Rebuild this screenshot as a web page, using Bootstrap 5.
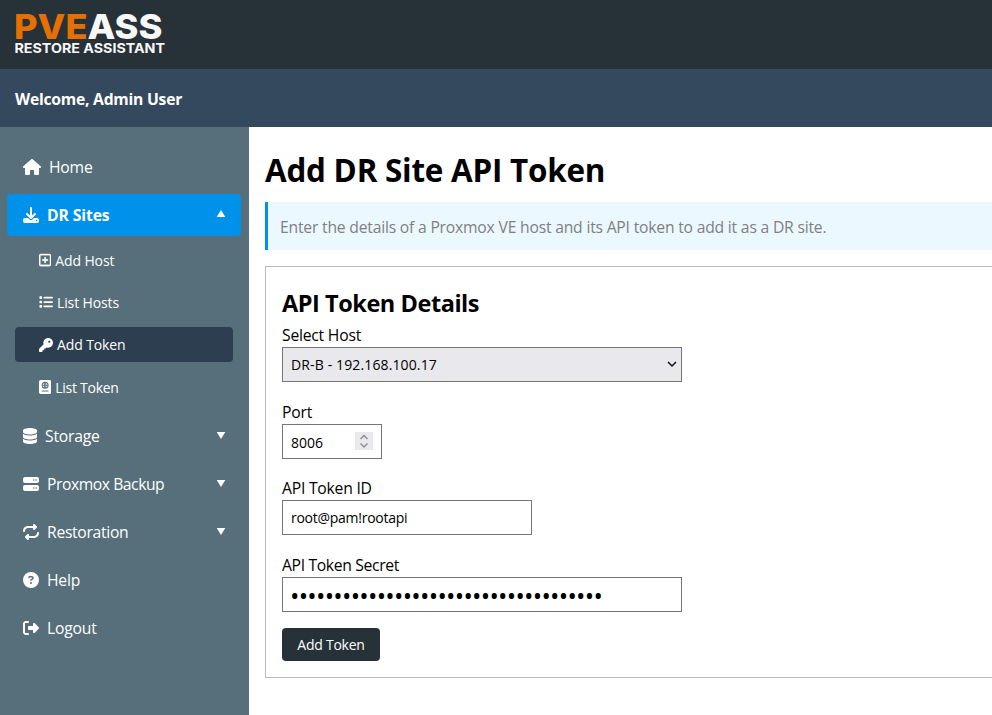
<!DOCTYPE html>
<html lang="en">
<head>
<meta charset="utf-8">
<meta name="viewport" content="width=device-width, initial-scale=1">
<title>PVEASS Restore Assistant</title>
<link href="https://cdn.jsdelivr.net/npm/bootstrap@5.3.0/dist/css/bootstrap.min.css" rel="stylesheet">
<style>
body{font-family:"Open Sans","Noto Sans",sans-serif;font-size:15.7px;line-height:21px;color:#000;background:#fff;height:715px;overflow:hidden}
.brandbar{height:69px;background:#273238}
.brandbar svg{display:block}
.welcomebar{height:58px;background:#34495e;color:#fff;padding:3px 15px 0;letter-spacing:-.24px}
.sidebar{width:249px;background:#566f7a;padding:19px 8px 0 7px}
.side-link{height:42px;margin-bottom:6px;padding:1px 15px 0 16px;color:#fff;text-decoration:none;border-radius:4px;letter-spacing:-.2px}
.side-link.open{background:#0091ea;font-weight:700;letter-spacing:-.1px}
.side-link svg{height:16px;fill:#fff;margin:-1px 8px 0 0;flex:none}
.side-link .caret{height:7px;width:10px;margin:-2px 0 0 auto}
.side-link.open .caret{margin-top:-4px}
.submenu{padding:0 8px 4px;margin:0}
.sub-link{height:35.3px;margin-bottom:7px;padding:1px 24px 0;font-size:14px;color:#fff;text-decoration:none;border-radius:4px;letter-spacing:-.12px}
.sub-link.current{background:#2d3e50}
.sub-link svg{height:14px;fill:#fff;margin-right:4px;flex:none}
main{padding:16px 0 0 16px}
h1{font-size:31.4px;line-height:43px;font-weight:700;margin:5px 0 11px;white-space:nowrap;letter-spacing:-.23px}
.hint{height:48px;background:#ecf8ff;border-left:3px solid #0091ea;color:#808080;padding:3px 0 0 12px;margin-bottom:16px;white-space:nowrap;letter-spacing:-.205px}
.panel{height:412px;border:1px solid #bbb;border-right:0;padding:20px 16px 0}
h2{font-size:23.5px;line-height:32px;font-weight:700;margin:0 0 6px;letter-spacing:-.45px}
.panel label{display:block;line-height:21px;margin-bottom:1px;letter-spacing:-.22px}
.field{display:flex;align-items:center;height:35px;border:1px solid #767676;background:#fff;padding:0 8px;font-size:14px;line-height:20px;color:#000;margin-bottom:19.67px;border-radius:0;outline:0}
.w400{width:400px}.w250{width:250px}.w100{width:100px}
.pick{background:#e9e9ed;letter-spacing:.13px}
.pick svg{margin-right:-4px}
.tight{letter-spacing:-.27px}
.tighter{letter-spacing:-.45px}
.snug{letter-spacing:-.3px}
.panel label.close-set{letter-spacing:-.34px}
.secret{font-size:25px;letter-spacing:-.73px;padding:1px 8px 0 7px;margin-bottom:16px}
.btn-add{height:33px;width:98px;background:#273238;color:#fff;font-size:14px;border:0;border-radius:4px;padding:1px 0 0;display:block;letter-spacing:-.25px}
.stepper{width:18px;height:18px;background:#e9e9ed}
</style>
</head>
<body class="d-flex flex-column">
<header class="brandbar flex-shrink-0">
<svg width="180" height="69" role="img" font-family="Inter, sans-serif">
<text x="14" y="38.800" font-size="34" font-weight="800" fill="#e57000" textLength="73.500" lengthAdjust="spacingAndGlyphs">PVE</text>
<text x="87.500" y="38.800" font-size="34" font-weight="800" fill="#f8f8f8" textLength="75" lengthAdjust="spacingAndGlyphs">ASS</text>
<text x="14.500" y="53" font-size="13.200" font-weight="700" fill="#f8f8f8" textLength="150.500" lengthAdjust="spacingAndGlyphs">RESTORE ASSISTANT</text>
</svg>
</header>
<div class="welcomebar d-flex align-items-center fw-bold flex-shrink-0">Welcome, Admin User</div>
<div class="d-flex flex-grow-1">
<nav class="sidebar flex-shrink-0">
<a href="#" class="side-link d-flex align-items-center"><svg viewBox="0 0 576 512"><path d="M575.8 255.500c0 18-15 32.100-32 32.100h-32l.7 160.200c0 2.700-.2 5.400-.5 8.100V472c0 22.100-17.900 40-40 40H392c-22.100 0-40-17.900-40-40V384c0-17.700-14.300-32-32-32H256c-17.700 0-32 14.300-32 32v88c0 22.100-17.900 40-40 40H104c-22.100 0-40-17.900-40-40V287.600H32c-18 0-32-14-32-32.100c0-9 3-17 10-24L266.400 8c7-7 15-8 22-8s15 2 21 7L564.800 231.500c8 7 12 15 11 24z"/></svg><span>Home</span></a>
<a href="#" class="side-link open d-flex align-items-center"><svg viewBox="0 0 512 512"><path d="M288 32c0-17.700-14.300-32-32-32s-32 14.300-32 32V274.700l-73.400-73.400c-12.500-12.500-32.800-12.500-45.300 0s-12.500 32.800 0 45.300l128 128c12.500 12.500 32.800 12.500 45.300 0l128-128c12.500-12.500 12.500-32.800 0-45.300s-32.800-12.500-45.300 0L288 274.700V32zM64 352c-35.300 0-64 28.700-64 64v32c0 35.300 28.700 64 64 64H448c35.300 0 64-28.700 64-64V416c0-35.300-28.700-64-64-64H346.500l-45.300 45.300c-25 25-65.500 25-90.500 0L165.500 352H64zm368 56a24 24 0 1 1 0 48 24 24 0 1 1 0-48z"/></svg><span>DR Sites</span><svg class="caret" viewBox="0 0 10 7"><path d="M5 0l4.300 7H.7z"/></svg></a>
<div class="submenu">
<a href="#" class="sub-link d-flex align-items-center"><svg viewBox="0 0 448 512"><path d="M64 80c-8.800 0-16 7.200-16 16v320c0 8.800 7.200 16 16 16h320c8.800 0 16-7.200 16-16V96c0-8.800-7.200-16-16-16H64zM0 96C0 60.700 28.700 32 64 32h320c35.300 0 64 28.700 64 64v320c0 35.300-28.700 64-64 64H64c-35.300 0-64-28.700-64-64V96zM200 344v-64h-64c-13.300 0-24-10.700-24-24s10.700-24 24-24h64v-64c0-13.300 10.700-24 24-24s24 10.700 24 24v64h64c13.300 0 24 10.700 24 24s-10.700 24-24 24h-64v64c0 13.300-10.700 24-24 24s-24-10.700-24-24z" stroke="#fff" stroke-width="12"/></svg><span>Add Host</span></a>
<a href="#" class="sub-link d-flex align-items-center"><svg viewBox="0 0 512 512"><path d="M40 48C26.700 48 16 58.700 16 72v48c0 13.300 10.700 24 24 24h48c13.300 0 24-10.700 24-24V72c0-13.300-10.700-24-24-24H40zM192 64c-17.700 0-32 14.300-32 32s14.300 32 32 32h288c17.700 0 32-14.300 32-32s-14.300-32-32-32H192zm0 160c-17.700 0-32 14.300-32 32s14.300 32 32 32h288c17.700 0 32-14.300 32-32s-14.300-32-32-32H192zm0 160c-17.700 0-32 14.300-32 32s14.300 32 32 32h288c17.700 0 32-14.300 32-32s-14.300-32-32-32H192zM16 232v48c0 13.300 10.700 24 24 24h48c13.300 0 24-10.700 24-24v-48c0-13.300-10.700-24-24-24H40c-13.300 0-24 10.700-24 24zM40 368c-13.300 0-24 10.700-24 24v48c0 13.300 10.700 24 24 24h48c13.300 0 24-10.700 24-24v-48c0-13.300-10.700-24-24-24H40z"/></svg><span>List Hosts</span></a>
<a href="#" class="sub-link current d-flex align-items-center"><svg viewBox="0 0 512 512"><path d="M336 352c97.200 0 176-78.800 176-176S433.200 0 336 0S160 78.800 160 176c0 18.700 2.900 36.800 8.300 53.700L7 391c-4.500 4.500-7 10.600-7 17v80c0 13.300 10.700 24 24 24h80c13.300 0 24-10.700 24-24v-40h40c13.300 0 24-10.700 24-24v-40h40c6.400 0 12.500-2.500 17-7l33.300-33.300c16.900 5.400 35 8.300 53.700 8.300zM376 96a40 40 0 1 1 0 80 40 40 0 1 1 0-80z"/></svg><span>Add Token</span></a>
<a href="#" class="sub-link tight d-flex align-items-center"><svg viewBox="0 0 448 512"><path fill-rule="evenodd" d="M64 0h320c35.300 0 64 28.700 64 64v384c0 35.300-28.700 64-64 64H64c-35.300 0-64-28.700-64-64V64C0 28.700 28.700 0 64 0zM112 384c-21 0-21 32 0 32h224c21 0 21-32 0-32zM352 192a128 128 0 1 0-256 0 128 128 0 1 0 256 0z"/><path d="M196 112c-10 18-15 40-16 64h-47c5-28 30-54 63-64m-63 96h47c1 24 6 46 16 64-33-10-58-36-63-64m79 0h24c-2 35-9 56-12 56s-10-21-12-56m0-32c2-35 9-56 12-56s10 21 12 56zm56 32h47c-5 28-30 54-63 64 10-18 15-40 16-64m0-32c-1-24-6-46-16-64 33 10 58 36 63 64z"/></svg><span>List Token</span></a>
</div>
<a href="#" class="side-link d-flex align-items-center"><svg viewBox="0 0 448 512"><path d="M448 80v48c0 44.200-100.300 80-224 80S0 172.200 0 128V80C0 35.800 100.300 0 224 0s224 35.800 224 80zM393.200 214.700c20.800-7.400 39.900-16.900 54.800-28.600V288c0 44.200-100.300 80-224 80S0 332.200 0 288V186.100c14.900 11.800 34 21.200 54.800 28.600C99.700 230.700 159.500 240 224 240s124.300-9.300 169.200-25.300zM0 346.100c14.900 11.800 34 21.200 54.800 28.600C99.700 390.700 159.500 400 224 400s124.300-9.300 169.200-25.300c20.800-7.400 39.900-16.900 54.800-28.600V432c0 44.200-100.300 80-224 80S0 476.200 0 432v-85.900z"/></svg><span>Storage</span><svg class="caret" viewBox="0 0 10 7"><path d="M.7 0h8.600L5 7z"/></svg></a>
<a href="#" class="side-link d-flex align-items-center"><svg viewBox="0 0 512 512"><path d="M64 32C28.700 32 0 60.700 0 96v64c0 35.300 28.700 64 64 64h384c35.300 0 64-28.700 64-64V96c0-35.300-28.700-64-64-64H64zm280 72a24 24 0 1 1 0 48 24 24 0 1 1 0-48zm48 24a24 24 0 1 1 48 0 24 24 0 1 1-48 0zM64 288c-35.300 0-64 28.700-64 64v64c0 35.300 28.700 64 64 64h384c35.300 0 64-28.700 64-64v-64c0-35.300-28.700-64-64-64H64zm280 72a24 24 0 1 1 0 48 24 24 0 1 1 0-48zm56 24a24 24 0 1 1 48 0 24 24 0 1 1-48 0z"/></svg><span class="tighter">Proxmox Backup</span><svg class="caret" viewBox="0 0 10 7"><path d="M.7 0h8.600L5 7z"/></svg></a>
<a href="#" class="side-link d-flex align-items-center"><svg viewBox="0 0 512 512"><path d="M0 224c0 17.700 14.300 32 32 32s32-14.300 32-32c0-53 43-96 96-96h160v32c0 12.900 7.800 24.600 19.800 29.600s25.700 2.200 34.900-6.900l64-64c12.500-12.500 12.500-32.800 0-45.300l-64-64c-9.200-9.200-22.900-11.900-34.900-6.900S320 19.100 320 32v32H160C71.600 64 0 135.600 0 224zm512 64c0-17.700-14.300-32-32-32s-32 14.300-32 32c0 53-43 96-96 96H192v-32c0-12.900-7.800-24.600-19.800-29.600s-25.700-2.200-34.900 6.900l-64 64c-12.500 12.500-12.500 32.800 0 45.300l64 64c9.200 9.200 22.900 11.900 34.900 6.900s19.800-16.600 19.800-29.600v-32h160c88.400 0 160-71.600 160-160z"/></svg><span class="snug">Restoration</span><svg class="caret" viewBox="0 0 10 7"><path d="M.7 0h8.600L5 7z"/></svg></a>
<a href="#" class="side-link d-flex align-items-center"><svg viewBox="0 0 512 512"><path d="M256 512A256 256 0 1 0 256 0a256 256 0 1 0 0 512zM169.800 165.300c7.900-22.300 29.100-37.300 52.800-37.300h58.300c34.900 0 63.100 28.300 63.100 63.100c0 22.600-12.100 43.500-31.700 54.800L280 264.400c-.2 13-10.900 23.600-24 23.600c-13.300 0-24-10.700-24-24v-13.500c0-8.600 4.600-16.500 12.100-20.800l44.300-25.400c4.700-2.700 7.600-7.700 7.600-13.100c0-8.400-6.800-15.100-15.100-15.100h-58.300c-3.400 0-6.400 2.100-7.500 5.300l-.4 1.200c-4.400 12.500-18.200 19-30.600 14.600s-19-18.200-14.600-30.600l.3-1.300zM224 352a32 32 0 1 1 64 0 32 32 0 1 1-64 0z"/></svg><span>Help</span></a>
<a href="#" class="side-link d-flex align-items-center"><svg viewBox="0 0 512 512"><path d="M377.900 105.900L500.700 228.700c7.200 7.200 11.300 17.100 11.300 27.300s-4.100 20.100-11.300 27.300L377.900 406.100c-6.400 6.400-15 9.900-24 9.900c-18.700 0-33.900-15.200-33.900-33.900V320H192c-17.700 0-32-14.300-32-32v-64c0-17.700 14.300-32 32-32h128v-62.100c0-18.700 15.200-33.900 33.900-33.900c9 0 17.600 3.600 24 9.900zM160 96H96c-17.700 0-32 14.300-32 32v256c0 17.700 14.300 32 32 32h64c17.700 0 32 14.300 32 32s-14.300 32-32 32H96c-53 0-96-43-96-96V128C0 75 43 32 96 32h64c17.700 0 32 14.300 32 32s-14.300 32-32 32z"/></svg><span>Logout</span></a>
</nav>
<main class="flex-grow-1">
<h1>Add DR Site API Token</h1>
<div class="hint d-flex align-items-center">Enter the details of a Proxmox VE host and its API token to add it as a DR site.</div>
<section class="panel">
<h2>API Token Details</h2>
<label>Select Host</label>
<div class="field pick w400 justify-content-between" role="combobox"><span>DR-B - 192.168.100.17</span><svg width="10" height="7" viewBox="0 0 10 7"><path d="M1 1l4 4 4-4" fill="none" stroke="#111" stroke-width="1.500"/></svg></div>
<label>Port</label>
<div class="field w100 justify-content-between"><span class="pt-1">8006</span><svg class="stepper" viewBox="0 0 18 18"><path d="M5.500 7L9 3.500 12.500 7M5.500 11.500L9 15l3.500-3.500" fill="none" stroke="#8f8f9d" stroke-width="1.500"/></svg></div>
<label>API Token ID</label>
<div class="field w250 tight">root@pam!rootapi</div>
<label class="close-set">API Token Secret</label>
<input class="field w400 secret" type="password" value="012345678901234567890123456789012345" aria-label="API Token Secret">
<button class="btn btn-add">Add Token</button>
</section>
</main>
</div>
<script src="https://cdn.jsdelivr.net/npm/bootstrap@5.3.0/dist/js/bootstrap.bundle.min.js"></script>
</body>
</html>
